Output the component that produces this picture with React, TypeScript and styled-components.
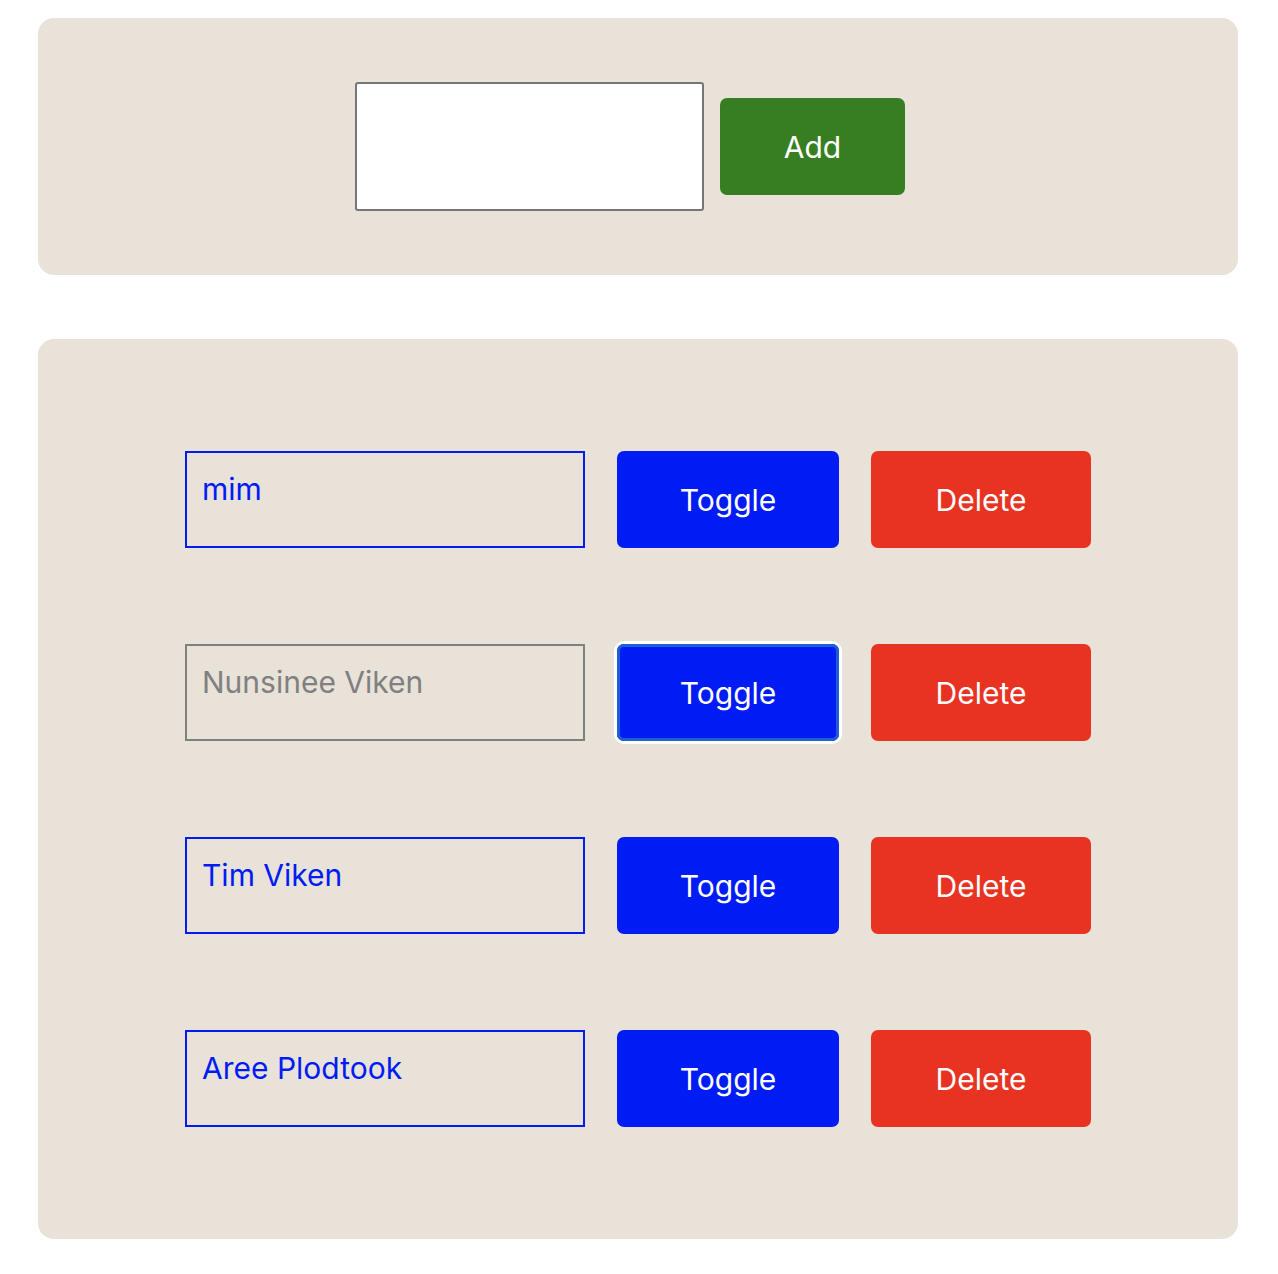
import { useState } from 'react';
import styled, { createGlobalStyle } from 'styled-components';

type Person = { id: number; name: string; done: boolean };

const initial: Person[] = [
  { id: 1, name: 'mim', done: false },
  { id: 2, name: 'Nunsinee Viken', done: true },
  { id: 3, name: 'Tim Viken', done: false },
  { id: 4, name: 'Aree Plodtook', done: false },
];

export default function App() {
  const [people, setPeople] = useState<Person[]>(initial);
  const [draft, setDraft] = useState('');

  const add = () => {
    if (!draft.trim()) return;
    setPeople([...people, { id: Date.now(), name: draft, done: false }]);
    setDraft('');
  };

  const toggle = (id: number) =>
    setPeople(people.map((p) => (p.id === id ? { ...p, done: !p.done } : p)));

  const remove = (id: number) => setPeople(people.filter((p) => p.id !== id));

  return (
    <>
      <GlobalStyle />
      <Page>
        <Panel>
          <AddRow>
            <NewInput value={draft} onChange={(e) => setDraft(e.target.value)} />
            <AddButton onClick={add}>Add</AddButton>
          </AddRow>
        </Panel>

        <ListPanel>
          {people.map((p) => (
            <Row key={p.id}>
              <NameBox $done={p.done}>{p.name}</NameBox>
              <ActionButton
                $color="#001cf5"
                $width={222}
                $focused={p.id === 2}
                onClick={() => toggle(p.id)}
              >
                Toggle
              </ActionButton>
              <ActionButton $color="#e83323" $width={220} onClick={() => remove(p.id)}>
                Delete
              </ActionButton>
            </Row>
          ))}
        </ListPanel>
      </Page>
    </>
  );
}

const GlobalStyle = createGlobalStyle`
  body {
    margin: 0;
    background: #ffffff;
    font-family: 'Inter', 'Liberation Sans', sans-serif;
  }
`;

const Page = styled.div`
  width: 1200px;
  margin: 18px 0 0 38px;
  display: flex;
  flex-direction: column;
  gap: 64px;
  padding-bottom: 35px;
`;

const Panel = styled.div`
  background-color: #e8e2d9;
  border-radius: 16px;
  height: 257px;
  display: flex;
  align-items: center;
  justify-content: center;
`;

const AddRow = styled.div`
  display: flex;
  align-items: center;
  gap: 16px;
  padding-right: 16px;
`;

const NewInput = styled.textarea`
  box-sizing: border-box;
  width: 349px;
  height: 129px;
  border: 2px solid #767676;
  border-radius: 3px;
  background: #ffffff;
  resize: none;
  outline: none;
  font-family: 'Inter', sans-serif;
  font-size: 30px;
  padding: 14px;
`;

const AddButton = styled.button`
  width: 185px;
  height: 97px;
  border: none;
  border-radius: 7px;
  background-color: #377e22;
  color: #ffffff;
  font-family: 'Inter', sans-serif;
  font-size: 30px;
  cursor: pointer;
`;

const ListPanel = styled.div`
  background-color: #e8e2d9;
  border-radius: 16px;
  padding: 112px 0;
  display: flex;
  flex-direction: column;
  align-items: center;
  gap: 96px;
`;

const Row = styled.div`
  display: flex;
  gap: 32px;
`;

const NameBox = styled.div<{ $done: boolean }>`
  box-sizing: border-box;
  width: 400px;
  height: 97px;
  padding: 14px 15px;
  border: 2px solid ${(p) => (p.$done ? '#808080' : '#001cf5')};
  color: ${(p) => (p.$done ? '#808080' : '#001cf5')};
  font-size: 30px;
  line-height: 44px;
`;

const ActionButton = styled.button<{ $color: string; $width: number; $focused?: boolean }>`
  width: ${(p) => p.$width}px;
  height: 97px;
  border: none;
  border-radius: 7px;
  background-color: ${(p) => p.$color};
  color: #ffffff;
  font-family: 'Inter', sans-serif;
  font-size: 30px;
  cursor: pointer;
  box-shadow: ${(p) =>
    p.$focused ? 'inset 0 0 0 3px #1f5ed4, 0 0 0 3px #ffffff' : 'none'};
`;
